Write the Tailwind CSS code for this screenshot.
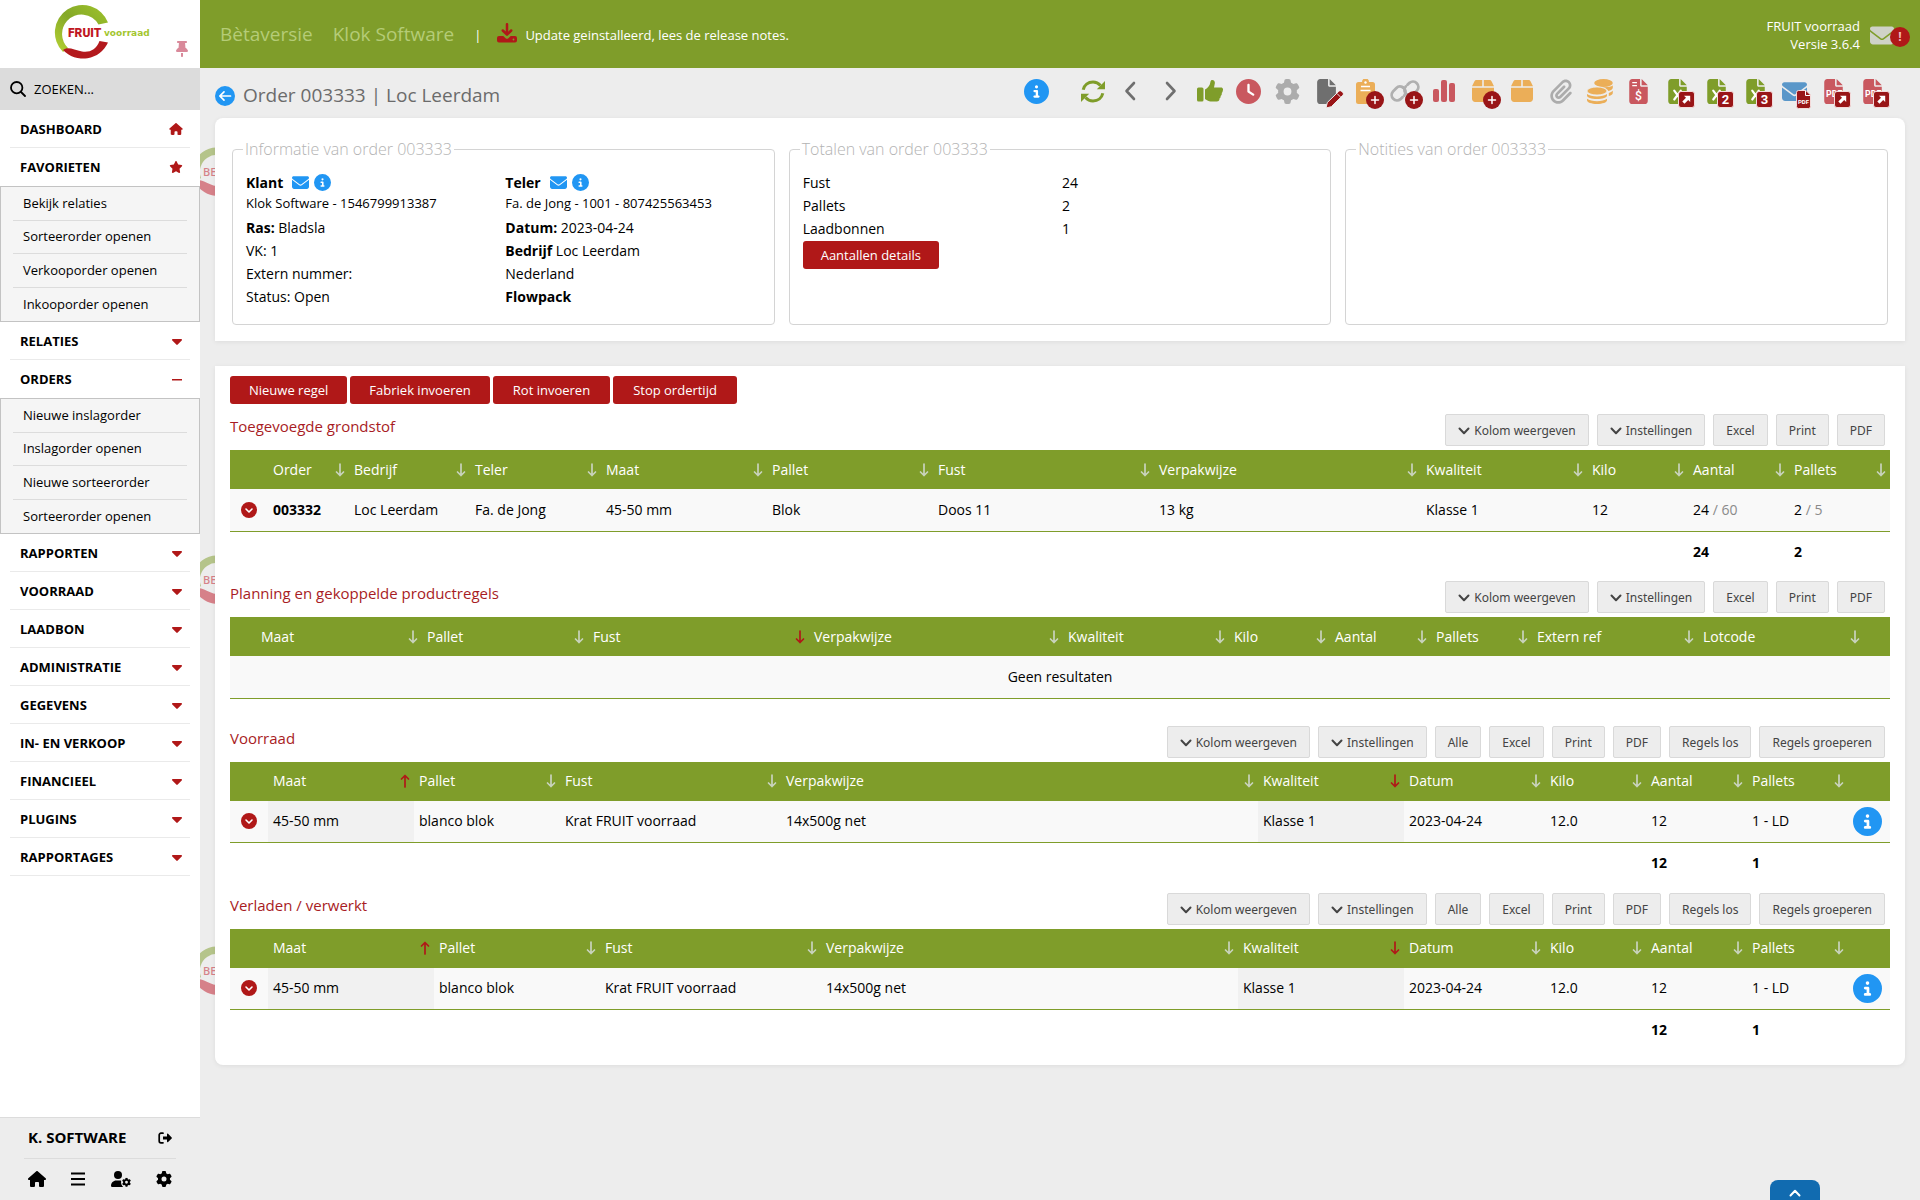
<!DOCTYPE html>
<html lang="nl">
<head>
    <meta charset="UTF-8">
    <meta name="viewport" content="width=device-width, initial-scale=1.0">
    <title>Order 003333 | Loc Leerdam</title>
    <script src="https://cdn.jsdelivr.net/npm/@tailwindcss/browser@4"></script>
</head>
<body class="flex min-h-screen bg-[#ededed] font-['Open_Sans',sans-serif] text-sm text-black">

    <!-- Iconen -->
    <svg class="hidden" xmlns="http://www.w3.org/2000/svg">
        <symbol id="house" viewBox="0 0 576 512"><path d="M575.8 255.5c0 18-15 32.1-32 32.1h-32l.7 160.2c0 2.7-.2 5.4-.5 8.1V472c0 22.1-17.9 40-40 40H456c-1.1 0-2.2 0-3.3-.1c-1.4 .1-2.8 .1-4.2 .1H416 392c-22.1 0-40-17.9-40-40V448 384c0-17.7-14.3-32-32-32H256c-17.7 0-32 14.3-32 32v64 24c0 22.1-17.9 40-40 40H160 128.1c-1.5 0-3-.1-4.5-.2c-1.2 .1-2.4 .2-3.6 .2H104c-22.1 0-40-17.9-40-40V360c0-.9 0-1.9 .1-2.8V287.6H32c-18 0-32-14-32-32.1c0-9 3-17 10-24L266.4 8c7-7 15-8 22-8s15 2 21 7L564.8 231.5c8 7 12 15 11 24z"/></symbol>
        <symbol id="star" viewBox="0 0 576 512"><path d="M316.9 18C311.6 7 300.4 0 288.1 0s-23.4 7-28.8 18L195 150.3 51.4 171.5c-12 1.8-22 10.2-25.7 21.7s-.7 24.2 7.9 32.7L137.8 329 113.2 474.7c-2 12 3 24.2 12.9 31.3s23 8 33.8 2.3l128.3-68.5 128.3 68.5c10.8 5.7 23.9 4.9 33.8-2.3s14.9-19.3 12.9-31.3L438.5 329 542.7 225.9c8.6-8.5 11.7-21.2 7.9-32.7s-13.7-19.9-25.7-21.7L381.2 150.3 316.9 18z"/></symbol>
        <symbol id="caret" viewBox="0 0 10 6"><path d="M1 0h8c.9 0 1.3 1 .7 1.6l-4 4c-.4.4-1 .4-1.4 0l-4-4C-.3 1 .1 0 1 0z"/></symbol>
        <symbol id="info" viewBox="0 0 512 512"><circle cx="256" cy="256" r="230" fill="#fff"/><path d="M256 512A256 256 0 1 0 256 0a256 256 0 1 0 0 512zM216 336h24V272H216c-13.3 0-24-10.7-24-24s10.7-24 24-24h48c13.3 0 24 10.7 24 24v88h8c13.3 0 24 10.7 24 24s-10.7 24-24 24H216c-13.3 0-24-10.7-24-24s10.7-24 24-24zm40-208a32 32 0 1 1 0 64 32 32 0 1 1 0-64z"/></symbol>
        <symbol id="envelope" viewBox="0 64 512 384"><path d="M48 64C21.5 64 0 85.5 0 112c0 15.1 7.1 29.3 19.2 38.4L236.8 313.6c11.4 8.5 27 8.5 38.4 0L492.8 150.4c12.1-9.1 19.2-23.3 19.2-38.4c0-26.5-21.5-48-48-48H48zM0 176V384c0 35.3 28.7 64 64 64H448c35.3 0 64-28.7 64-64V176L294.4 339.2c-22.8 17.1-54 17.1-76.8 0L0 176z"/></symbol>
        <symbol id="gear" viewBox="0 0 512 512"><path d="M495.9 166.6c3.2 8.7 .5 18.4-6.4 24.6l-43.3 39.4c1.1 8.3 1.7 16.8 1.7 25.4s-.6 17.1-1.7 25.4l43.3 39.4c6.9 6.2 9.6 15.9 6.4 24.6c-4.4 11.9-9.7 23.3-15.8 34.3l-4.7 8.1c-6.6 11-14 21.4-22.1 31.2c-5.9 7.2-15.7 9.6-24.5 6.8l-55.7-17.7c-13.4 10.3-28.2 18.9-44 25.4l-12.5 57.1c-2 9.1-9 16.3-18.2 17.8c-13.8 2.3-28 3.5-42.5 3.5s-28.7-1.2-42.5-3.5c-9.2-1.5-16.2-8.7-18.2-17.8l-12.5-57.1c-15.8-6.5-30.6-15.1-44-25.4L83.1 425.9c-8.8 2.8-18.6 .3-24.5-6.8c-8.1-9.8-15.5-20.2-22.1-31.2l-4.7-8.1c-6.1-11-11.4-22.4-15.8-34.3c-3.2-8.7-.5-18.4 6.4-24.6l43.3-39.4C64.6 273.1 64 264.6 64 256s.6-17.1 1.7-25.4L22.4 191.2c-6.9-6.2-9.6-15.9-6.4-24.6c4.4-11.9 9.7-23.3 15.8-34.3l4.7-8.1c6.6-11 14-21.4 22.1-31.2c5.9-7.2 15.7-9.6 24.5-6.8l55.7 17.7c13.4-10.3 28.2-18.9 44-25.4l12.5-57.1c2-9.1 9-16.3 18.2-17.8C227.3 1.2 241.5 0 256 0s28.7 1.2 42.5 3.5c9.2 1.5 16.2 8.7 18.2 17.8l12.5 57.1c15.8 6.5 30.6 15.1 44 25.4l55.7-17.7c8.8-2.8 18.6-.3 24.5 6.8c8.1 9.8 15.5 20.2 22.1 31.2l4.7 8.1c6.1 11 11.4 22.4 15.8 34.3zM256 336a80 80 0 1 0 0-160 80 80 0 1 0 0 160z"/></symbol>
        <symbol id="box" viewBox="0 32 448 448"><path d="M50.7 58.5L0 160H208V32H93.7C75.5 32 58.9 42.3 50.7 58.5zM240 160H448L397.3 58.5C389.1 42.3 372.5 32 354.3 32H240V160zm208 32H0V416c0 35.3 28.7 64 64 64H384c35.3 0 64-28.7 64-64V192z"/></symbol>
        <symbol id="file" viewBox="0 0 384 512"><path d="M0 64C0 28.7 28.7 0 64 0H224V128c0 17.7 14.3 32 32 32H384V448c0 35.3-28.7 64-64 64H64c-35.3 0-64-28.7-64-64V64zm384 64H256V0L384 128z"/></symbol>
        <symbol id="excel" viewBox="0 0 384 512"><use href="#file"/><path d="M125 240l134 180M259 240L125 420" stroke="#fff" stroke-width="44" stroke-linecap="round"/></symbol>
        <symbol id="pdf" viewBox="0 0 384 512"><use href="#file"/><text x="40" y="370" font-family="Roboto" font-weight="700" font-size="180" fill="#fff">PDF</text></symbol>
        <symbol id="plus-badge" viewBox="0 0 18 18"><circle cx="9" cy="9" r="9"/><path d="M9 5.5v7M5.5 9h7" stroke="#fff" stroke-width="1.5" stroke-linecap="round"/></symbol>
        <symbol id="out-badge" viewBox="0 0 17 17"><rect x=".5" y=".5" width="16" height="16" rx="2.5" stroke="#f4dada"/><path d="M6 4.8h6.2V11l-2-2-3.7 3.7-2.2-2.2L8 6.8z" fill="#fff"/></symbol>
        <symbol id="sort" viewBox="0 0 10 14"><path d="M5 1v11.5M1.5 9L5 12.5 8.500 9" fill="none" stroke="currentColor" stroke-width="1.7" stroke-linecap="round" stroke-linejoin="round"/></symbol>
        <symbol id="open-row" viewBox="0 0 16 16"><circle cx="8" cy="8" r="8"/><path d="M5 7l3 3 3-3" fill="none" stroke="#fff" stroke-width="1.6" stroke-linecap="round" stroke-linejoin="round"/></symbol>
        <symbol id="chevron" viewBox="0 0 12 8"><path d="M1.5 1.5L6 6.2l4.500-4.700" fill="none" stroke="currentColor" stroke-width="2" stroke-linecap="round" stroke-linejoin="round"/></symbol>
        <symbol id="watermark" viewBox="0 0 62 56"><path d="M33 10A24 24 0 0 0 -5 38L1 34A17 17 0 0 1 28 15z" fill="#7f9d2a"/><path d="M-5 37C2 33 10 44 22 42L35 44A24 24 0 0 1 -5 37z" fill="#c01828"/><text x="3" y="32" font-family="Open Sans" font-weight="600" font-size="11" fill="#c01828">BETA</text></symbol>
    </svg>

    <!-- Zijmenu -->
    <aside class="sticky top-0 flex h-screen w-[200px] shrink-0 flex-col bg-white">
        <div class="flex h-[68px] shrink-0 justify-end">
            <a href="#" aria-label="FRUIT voorraad">
                <svg class="h-[68px] w-[108px]" viewBox="52 0 108 68">
                    <defs>
                        <linearGradient id="groen" x1="0" y1="1" x2="1" y2="0"><stop offset="0" stop-color="#b7d334"/><stop offset=".5" stop-color="#84a827"/><stop offset="1" stop-color="#9fc42c"/></linearGradient>
                    </defs>
                    <path d="M108 22.500A27.500 27.500 0 1 0 63 52L68 48A19.500 19.500 0 0 1 67 21A19.500 19.500 0 0 1 98.500 24.500z" fill="url(#groen)"/>
                    <path d="M63 50C68 46 74 50 82 51.500C90 52.500 96 50 99.500 41L108 42.500A27.500 27.500 0 0 1 63 50z" fill="#b3191d"/>
                    <text x="68" y="37" font-family="Roboto" font-weight="900" font-size="12" fill="#c01722">FRUIT</text>
                    <text x="104" y="36" font-family="DejaVu Sans" font-weight="700" font-size="9" fill="#a3c62f">voorraad</text>
                </svg>
            </a>
            <button class="mt-[37px] mr-[10px] ml-[14px] flex w-4 justify-center" aria-label="Menu vastzetten"><svg class="mt-1 h-4 w-3 fill-[#d9899a]" viewBox="0 0 384 512"><path d="M32 32C32 14.300 46.300 0 64 0H320c17.700 0 32 14.300 32 32s-14.300 32-32 32H290.500l11.400 148.200c36.700 19.900 65.700 53.200 79.500 94.700l1 3c3.300 9.800 1.600 20.500-4.400 28.800s-15.700 13.300-26 13.300H32c-10.300 0-19.900-4.900-26-13.300s-7.700-19.100-4.400-28.800l1-3c13.800-41.500 42.800-74.800 79.500-94.700L93.500 64H64C46.300 64 32 49.700 32 32zM160 384h64v96c0 17.700-14.300 32-32 32s-32-14.300-32-32V384z"/></svg></button>
        </div>
        <label class="flex h-[42px] shrink-0 items-center gap-2 bg-[#dcdcdc] px-[10px]">
            <svg class="h-4 w-4 shrink-0" viewBox="0 0 16 16" fill="none" stroke="#000" stroke-width="1.800" stroke-linecap="round"><circle cx="6.700" cy="6.700" r="5.700"/><path d="M11 11l4 4"/></svg>
            <input type="text" aria-label="Zoeken" placeholder="ZOEKEN..." class="w-full min-w-0 text-[13px] outline-none placeholder:text-black">
        </label>
        <nav class="flex-1 text-[13px]">
            <a href="#" class="mx-[10px] flex h-[38px] items-center justify-between border-b border-[#eaeaea] pt-px pr-[7px] pl-[10px] font-bold">DASHBOARD<svg class="h-3 w-[14px] fill-[#b01818]"><use href="#house"/></svg></a>
            <a href="#" class="mx-[10px] flex h-[38px] items-center justify-between pr-[7px] pl-[10px] font-bold">FAVORIETEN<svg class="h-3 w-[14px] fill-[#b01818]"><use href="#star"/></svg></a>
            <div class="flex h-[136px] flex-col border border-[#c3c3c3] bg-[#f5f5f5] px-3">
                <a href="#" class="flex flex-1 items-center border-b border-[#dcdcdc] pl-[10px]">Bekijk relaties</a>
                <a href="#" class="flex flex-1 items-center border-b border-[#dcdcdc] pl-[10px]">Sorteerorder openen</a>
                <a href="#" class="flex flex-1 items-center border-b border-[#dcdcdc] pl-[10px]">Verkooporder openen</a>
                <a href="#" class="flex flex-1 items-center pt-px pl-[10px]">Inkooporder openen</a>
            </div>
            <a href="#" class="mx-[10px] flex h-[38px] items-center justify-between border-b border-[#eaeaea] pt-[2px] pr-2 pl-[10px] font-bold">RELATIES<svg class="h-[6px] w-[10px] fill-[#b01818]"><use href="#caret"/></svg></a>
            <a href="#" class="mx-[10px] flex h-[38px] items-center justify-between pt-px pr-2 pl-[10px] font-bold">ORDERS<svg class="h-[6px] w-[10px] fill-[#b01818]" viewBox="0 0 10 6"><rect y="2" width="10" height="1.500"/></svg></a>
            <div class="flex h-[136px] flex-col border border-[#c3c3c3] bg-[#f5f5f5] px-3">
                <a href="#" class="flex flex-1 items-center border-b border-[#dcdcdc] pl-[10px]">Nieuwe inslagorder</a>
                <a href="#" class="flex flex-1 items-center border-b border-[#dcdcdc] pl-[10px]">Inslagorder openen</a>
                <a href="#" class="flex flex-1 items-center border-b border-[#dcdcdc] pl-[10px]">Nieuwe sorteerorder</a>
                <a href="#" class="flex flex-1 items-center pt-px pl-[10px]">Sorteerorder openen</a>
            </div>
            <a href="#" class="mx-[10px] flex h-[38px] items-center justify-between border-b border-[#eaeaea] pt-[2px] pr-2 pl-[10px] font-bold">RAPPORTEN<svg class="h-[6px] w-[10px] fill-[#b01818]"><use href="#caret"/></svg></a>
            <a href="#" class="mx-[10px] flex h-[38px] items-center justify-between border-b border-[#eaeaea] pt-[2px] pr-2 pl-[10px] font-bold">VOORRAAD<svg class="h-[6px] w-[10px] fill-[#b01818]"><use href="#caret"/></svg></a>
            <a href="#" class="mx-[10px] flex h-[38px] items-center justify-between border-b border-[#eaeaea] pt-[2px] pr-2 pl-[10px] font-bold">LAADBON<svg class="h-[6px] w-[10px] fill-[#b01818]"><use href="#caret"/></svg></a>
            <a href="#" class="mx-[10px] flex h-[38px] items-center justify-between border-b border-[#eaeaea] pt-[2px] pr-2 pl-[10px] font-bold">ADMINISTRATIE<svg class="h-[6px] w-[10px] fill-[#b01818]"><use href="#caret"/></svg></a>
            <a href="#" class="mx-[10px] flex h-[38px] items-center justify-between border-b border-[#eaeaea] pt-[2px] pr-2 pl-[10px] font-bold">GEGEVENS<svg class="h-[6px] w-[10px] fill-[#b01818]"><use href="#caret"/></svg></a>
            <a href="#" class="mx-[10px] flex h-[38px] items-center justify-between border-b border-[#eaeaea] pt-[2px] pr-2 pl-[10px] font-bold">IN- EN VERKOOP<svg class="h-[6px] w-[10px] fill-[#b01818]"><use href="#caret"/></svg></a>
            <a href="#" class="mx-[10px] flex h-[38px] items-center justify-between border-b border-[#eaeaea] pt-[2px] pr-2 pl-[10px] font-bold">FINANCIEEL<svg class="h-[6px] w-[10px] fill-[#b01818]"><use href="#caret"/></svg></a>
            <a href="#" class="mx-[10px] flex h-[38px] items-center justify-between border-b border-[#eaeaea] pt-[2px] pr-2 pl-[10px] font-bold">PLUGINS<svg class="h-[6px] w-[10px] fill-[#b01818]"><use href="#caret"/></svg></a>
            <a href="#" class="mx-[10px] flex h-[38px] items-center justify-between border-b border-[#eaeaea] pt-[2px] pr-2 pl-[10px] font-bold">RAPPORTAGES<svg class="h-[6px] w-[10px] fill-[#b01818]"><use href="#caret"/></svg></a>
        </nav>
        <div class="h-[83px] shrink-0 border-t border-[#dcdcdc] bg-[#ededed] px-6">
            <div class="flex h-[41px] items-center justify-between border-b border-[#dcdcdc] pr-1 pl-1">
                <span class="text-[15px] font-bold">K. SOFTWARE</span>
                <button aria-label="Uitloggen"><svg class="h-3 w-[14px]" viewBox="0 0 14 12"><path d="M5 1.200H3A1.800 1.800 0 0 0 1.200 3v6A1.800 1.800 0 0 0 3 10.800h2" fill="none" stroke="#000" stroke-width="1.700" stroke-linecap="round"/><path d="M5 4.500h4V2.300c0-.6.700-.9 1.100-.5l3.600 3.700c.3.300.3.700 0 1L10.100 10c-.4.400-1.100.1-1.100-.5V7.500H5z"/></svg></button>
            </div>
            <div class="flex h-10 items-center justify-between px-1">
                <button aria-label="Start"><svg class="h-4 w-[18px]"><use href="#house"/></svg></button>
                <button aria-label="Menu"><svg class="h-4 w-[14px]" viewBox="0 0 14 16" stroke="#000" stroke-width="2"><path d="M0 2.500h14M0 8h14M0 13.500h14"/></svg></button>
                <button aria-label="Gebruikersinstellingen"><svg class="h-4 w-5" viewBox="0 0 20 16"><circle cx="7" cy="4" r="4"/><path d="M0 14.800C0 11.800 2.300 9.500 5.300 9.500h3.400c.6 0 1 .1 1.500.2-.5 2.500.3 4.700 2 6.300H1.200A1.200 1.200 0 0 1 0 14.800z"/><svg x="11" y="6.500" width="9" height="9.500"><use href="#gear"/></svg></svg></button>
                <button aria-label="Instellingen"><svg class="h-4 w-4"><use href="#gear"/></svg></button>
            </div>
        </div>
    </aside>

    <main class="relative min-w-0 flex-1 overflow-hidden">
        <!-- Watermerk achter de kaarten -->
        <svg class="absolute top-[144px] left-0 h-14 w-[62px] opacity-50"><use href="#watermark"/></svg>
        <svg class="absolute top-[552px] left-0 h-14 w-[62px] opacity-50"><use href="#watermark"/></svg>
        <svg class="absolute top-[943px] left-0 h-14 w-[62px] opacity-50"><use href="#watermark"/></svg>

        <header class="flex h-[68px] items-center bg-[#7f9d2a] pt-[2px] pr-[10px] pl-5 text-[13px] text-white">
            <span class="mr-5 text-[19px] text-[#b5cc77]">Bètaversie</span>
            <span class="mr-5 text-[19px] text-[#b5cc77]">Klok Software</span>
            <span class="mr-4">|</span>
            <svg class="mr-2 mb-1 h-5 w-5 fill-[#b01818]" viewBox="0 0 20 20"><path d="M10 1.200v10M5.800 7.500L10 11.700l4.200-4.200" fill="none" stroke="#b01818" stroke-width="2.500" stroke-linecap="round" stroke-linejoin="round"/><path d="M2 13h4.300l2.300 2.200c.8.700 2 .7 2.800 0L13.700 13H18a2 2 0 0 1 2 2v2.500a2 2 0 0 1-2 2H2a2 2 0 0 1-2-2V15a2 2 0 0 1 2-2z"/><circle cx="16.500" cy="16.500" r=".9" fill="#7f9d2a"/></svg>
            <a href="#">Update geinstalleerd, lees de release notes.</a>
            <div class="ml-auto text-right leading-[18px]">FRUIT voorraad<br>Versie 3.6.4</div>
            <button class="relative ml-[10px] h-6 w-10" aria-label="Berichten">
                <svg class="h-[19px] w-6 fill-[#cfd2c8]"><use href="#envelope"/></svg>
                <span class="absolute top-1 right-0 flex h-5 w-5 items-center justify-center rounded-full bg-[#b01818] text-xs font-bold text-[#f2b8b8]">!</span>
            </button>
        </header>

        <div class="relative">
            <div class="flex h-[50px] items-center pt-[5px] pr-7 pl-[15px]">
                <a href="#" aria-label="Terug"><svg class="h-5 w-5" viewBox="0 0 20 20"><circle cx="10" cy="10" r="10" fill="#2196f3"/><path d="M15.500 10H5M9 5.800L4.800 10 9 14.200" fill="none" stroke="#fff" stroke-width="1.700" stroke-linecap="round" stroke-linejoin="round"/></svg></a>
                <h1 class="ml-2 text-[19px] text-[#6b6b6b]">Order 003333 | Loc Leerdam</h1>
                <div class="mb-[9px] ml-auto flex">
                    <button class="mr-[17px] flex h-10 w-[39px] items-center justify-center" aria-label="Info"><svg class="h-[25px] w-[25px] fill-[#2196f3]"><use href="#info"/></svg></button>
                    <button class="flex h-10 w-[39px] items-center justify-center" aria-label="Vernieuwen"><svg class="h-[25px] w-6" viewBox="0 0 24 24" fill="none" stroke="#7f9d2a" stroke-width="3"><path d="M2.200 10.200C3.200 5.600 7 2.500 12 2.500c3 0 5.600 1.400 7.500 3.600"/><path d="M21.800 13.800c-1 4.600-4.800 7.700-9.800 7.700-3 0-5.600-1.400-7.500-3.600"/><path d="M24 1.500V9.700H15.800zM0 22.500V14.300H8.200z" fill="#7f9d2a" stroke="none"/></svg></button>
                    <button class="flex h-10 w-[39px] items-center justify-center pr-1" aria-label="Vorige"><svg class="h-5 w-3" viewBox="0 0 12 20" fill="none" stroke="#6f6f6f" stroke-width="2.600" stroke-linecap="round" stroke-linejoin="round"><path d="M10 2L2.500 10 10 18"/></svg></button>
                    <button class="flex h-10 w-[39px] items-center justify-center" aria-label="Volgende"><svg class="h-5 w-3" viewBox="0 0 12 20" fill="none" stroke="#6f6f6f" stroke-width="2.600" stroke-linecap="round" stroke-linejoin="round"><path d="M2 2l7.500 8L2 18"/></svg></button>
                    <button class="flex h-10 w-[39px] items-center justify-center" aria-label="Akkoord"><svg class="h-6 w-[26px] fill-[#7f9d2a]" viewBox="0 0 26 24"><rect y="8.500" width="6.500" height="14" rx="1.500"/><path d="M8 10.500c3-1.500 4.800-4 5.300-7C13.600 1.500 14.300 1 15.300 1c1.800 0 2.900 1.600 2.500 3.600L17 8.500h7c1.300 0 2.200 1 2 2.200l-.3 1.600c-.1.800-.5 1.300-1 1.600.2.400.2.900.1 1.400-.1.700-.6 1.300-1.200 1.600.1.300.1.700 0 1.100-.1.700-.6 1.300-1.200 1.500.1.300.1.600 0 1-.2 1.200-1.200 2-2.400 2h-6.500c-1.700 0-3.200-1-5.500-2.500z"/></svg></button>
                    <button class="flex h-10 w-[39px] items-center justify-center" aria-label="Tijd"><svg class="h-[25px] w-[25px] fill-[#c9585f]" viewBox="0 0 512 512"><circle cx="256" cy="256" r="230" fill="#fff"/><path d="M256 0a256 256 0 1 1 0 512A256 256 0 1 1 256 0zM232 120V256c0 8 4 15.500 10.700 20l96 64c11 7.400 25.900 4.400 33.300-6.700s4.400-25.900-6.700-33.300L280 243.200V120c0-13.300-10.700-24-24-24s-24 10.700-24 24z"/></svg></button>
                    <button class="flex h-10 w-[39px] items-center justify-center" aria-label="Instellingen"><svg class="h-[25px] w-[25px] fill-[#acacac]"><use href="#gear"/></svg></button>
                    <button class="relative flex h-10 w-[39px] items-center justify-center" aria-label="Bewerken"><svg class="h-[25px] w-[19px] fill-[#6f6f6f]"><use href="#file"/></svg><svg class="absolute top-[19px] left-[18px] h-[19px] w-[19px]" viewBox="0 0 19 19"><path d="M1 18l1.300-5.500L13.800 1.300c.8-.8 1.900-.8 2.700 0l1.300 1.300c.8.800.8 1.900 0 2.700L6.300 16.700z" fill="#991517" stroke="#ededed" stroke-width="1"/><path d="M12 3.500L15.500 7" stroke="#ededed"/></svg></button>
                    <button class="relative flex h-10 w-[39px] items-center justify-center" aria-label="Klembord toevoegen"><svg class="h-[25px] w-[19px]" viewBox="0 0 19 25"><path d="M2.500 3H6a3.500 3.500 0 0 1 7 0h3.500A2.500 2.500 0 0 1 19 5.500v17a2.500 2.500 0 0 1-2.500 2.500h-14A2.500 2.500 0 0 1 0 22.500v-17A2.500 2.500 0 0 1 2.500 3z" fill="#ebae58"/><circle cx="9.500" cy="3.500" r="1.200" fill="#fff"/><path d="M5 7.500h9M4.500 11.500h10" stroke="#fff" stroke-width="1.300"/></svg><svg class="absolute top-5 left-5 h-[18px] w-[18px] fill-[#991517]"><use href="#plus-badge"/></svg></button>
                    <button class="relative flex h-10 w-[39px] items-center justify-center" aria-label="Koppeling toevoegen"><svg class="h-6 w-[30px]" viewBox="0 0 30 24" fill="none" stroke="#b0b0b0" stroke-width="2.800" stroke-linecap="round"><path d="M12.700 8.200a5.300 5.300 0 0 0-6.500 1l-3.300 3.400A5.400 5.400 0 0 0 10.500 20.200l2-2"/><path d="M12.700 8.200a5.400 5.400 0 0 1 1.500 8.400"/><path d="M17.300 15.800a5.300 5.300 0 0 0 6.500-1l3.300-3.400A5.400 5.400 0 0 0 19.500 3.800l-2 2"/><path d="M17.300 15.800a5.400 5.400 0 0 1-1.500-8.400"/></svg><svg class="absolute top-5 left-5 h-[18px] w-[18px] fill-[#991517]"><use href="#plus-badge"/></svg></button>
                    <button class="flex h-10 w-[39px] items-center justify-center" aria-label="Grafiek"><svg class="h-[22px] w-[22px] fill-[#c9585f]" viewBox="0 0 22 22"><rect y="9" width="6" height="13" rx="2"/><rect x="8" width="6" height="22" rx="2"/><rect x="16" y="3" width="6" height="19" rx="2"/></svg></button>
                    <button class="relative flex h-10 w-[39px] items-center justify-center" aria-label="Doos toevoegen"><svg class="h-[22px] w-[22px] fill-[#ebae58]"><use href="#box"/></svg><svg class="absolute top-5 left-5 h-[18px] w-[18px] fill-[#991517]"><use href="#plus-badge"/></svg></button>
                    <button class="flex h-10 w-[39px] items-center justify-center" aria-label="Doos"><svg class="h-[22px] w-[22px] fill-[#ebae58]"><use href="#box"/></svg></button>
                    <button class="flex h-10 w-[39px] items-center justify-center" aria-label="Bijlage"><svg class="h-[25px] w-[22px] fill-[#acacac]" viewBox="0 0 448 512"><path d="M364.200 83.800c-24.400-24.400-64-24.400-88.400 0l-184 184c-42.100 42.100-42.100 110.300 0 152.400s110.300 42.100 152.400 0l152-152c10.900-10.900 28.700-10.900 39.600 0s10.900 28.700 0 39.600l-152 152c-64 64-167.600 64-231.600 0s-64-167.600 0-231.600l184-184c46.300-46.300 121.300-46.300 167.600 0s46.300 121.300 0 167.600l-176 176c-28.600 28.600-75 28.600-103.600 0s-28.600-75 0-103.600l144-144c10.900-10.900 28.700-10.900 39.600 0s10.900 28.700 0 39.600l-144 144c-6.700 6.700-6.700 17.700 0 24.400s17.700 6.700 24.400 0l176-176c24.400-24.400 24.400-64 0-88.400z"/></svg></button>
                    <button class="flex h-10 w-[39px] items-center justify-center" aria-label="Kosten"><svg class="h-[25px] w-[26px]" viewBox="0 0 26 25" fill="#ebae58"><ellipse cx="16.500" cy="4" rx="9.300" ry="4"/><path d="M25.800 6.500v2.200c0 1.500-2 2.700-4.500 3.400-.6-1.700-3-3.300-6-4 4.500.3 8.500-.2 10.500-1.600zM25.800 11.800V14c0 1.300-1.500 2.400-4 3v-3c1.600-.5 3-1.200 4-2.200z"/><ellipse cx="10" cy="12" rx="10" ry="4" stroke="#ededed" stroke-width=".8"/><path d="M0 15c4 3.200 16 3.200 20 0v1.500c0 2.200-4.500 3.600-10 3.600S0 18.700 0 16.500zM0 19.800c4 3.200 16 3.200 20 0v1.500c0 2.200-4.500 3.700-10 3.700S0 23.500 0 21.300z"/></svg></button>
                    <button class="flex h-10 w-[39px] items-center justify-center" aria-label="Factuur"><svg class="h-[25px] w-[19px] fill-[#c9585f]" viewBox="0 0 384 512"><use href="#file"/><path d="M64 72h96M64 136h96" stroke="#fff" stroke-width="26"/><text x="120" y="426" font-family="Roboto" font-weight="500" font-size="250" fill="#fff">$</text></svg></button>
                    <button class="relative flex h-10 w-[39px] items-center justify-center" aria-label="Excel export"><svg class="h-[25px] w-[19px] fill-[#7f9d2a]"><use href="#excel"/></svg><svg class="absolute top-5 left-5 h-[17px] w-[17px] fill-[#991517]"><use href="#out-badge"/></svg></button>
                    <button class="relative flex h-10 w-[39px] items-center justify-center" aria-label="Excel export 2"><svg class="h-[25px] w-[19px] fill-[#7f9d2a]"><use href="#excel"/></svg><span class="absolute top-5 left-5 h-[17px] w-[17px] rounded-[3px] border border-[#f4dada] bg-[#991517] font-['Roboto'] text-[13px] leading-[15px] font-bold text-white">2</span></button>
                    <button class="relative flex h-10 w-[39px] items-center justify-center" aria-label="Excel export 3"><svg class="h-[25px] w-[19px] fill-[#7f9d2a]"><use href="#excel"/></svg><span class="absolute top-5 left-5 h-[17px] w-[17px] rounded-[3px] border border-[#f4dada] bg-[#991517] font-['Roboto'] text-[13px] leading-[15px] font-bold text-white">3</span></button>
                    <button class="relative flex h-10 w-[39px] items-center justify-center" aria-label="PDF mailen"><svg class="h-[19px] w-[25px] fill-[#5a97c9]"><use href="#envelope"/></svg><svg class="absolute top-[19px] left-[21px] h-[19px] w-[15px]" viewBox="0 0 15 19"><path d="M2.500.5H10l4.500 4.500v11.500a2 2 0 0 1-2 2h-10a2 2 0 0 1-2-2v-14a2 2 0 0 1 2-2z" fill="#991517" stroke="#f4dada"/><path d="M9.500 1v4.500H14" fill="none" stroke="#fff"/><text x="2" y="14" font-family="Roboto" font-weight="700" font-size="6" fill="#fff">PDF</text></svg></button>
                    <button class="relative flex h-10 w-[39px] items-center justify-center" aria-label="PDF export"><svg class="h-[25px] w-[19px] fill-[#c9585f]"><use href="#pdf"/></svg><svg class="absolute top-5 left-5 h-[17px] w-[17px] fill-[#991517]"><use href="#out-badge"/></svg></button>
                    <button class="relative flex h-10 w-[39px] items-center justify-center" aria-label="PDF export 2"><svg class="h-[25px] w-[19px] fill-[#c9585f]"><use href="#pdf"/></svg><svg class="absolute top-5 left-5 h-[17px] w-[17px] fill-[#991517]"><use href="#out-badge"/></svg></button>
                </div>
            </div>

            <!-- Ordergegevens -->
            <section class="mx-[15px] grid grid-cols-3 gap-[14px] rounded-t-lg bg-white px-[17px] pt-[19px] pb-4 shadow-[0_1px_5px_rgba(0,0,0,0.07)]">
                <fieldset class="rounded border border-[#d4d4d4] px-[10px]">
                    <legend class="px-[2px] text-base leading-6 font-light text-[#b3b3b3]">Informatie van order 003333</legend>
                    <div class="grid grid-cols-2 gap-x-1 px-[3px] pt-[10px] pb-4 leading-[23px]">
                        <div>
                            <div class="flex h-[23px] items-center"><b>Klant</b>
                                <a href="#" class="ml-[9px]" aria-label="Mail klant"><svg class="h-[13px] w-[17px] fill-[#2196f3]"><use href="#envelope"/></svg></a>
                                <a href="#" class="ml-[5px]" aria-label="Info klant"><svg class="h-[17px] w-[17px] fill-[#2196f3]"><use href="#info"/></svg></a>
                            </div>
                            <p class="mb-1 text-[13px] leading-[18px]">Klok Software - 1546799913387</p>
                            <p><b>Ras:</b> Bladsla</p>
                            <p>VK: 1</p>
                            <p>Extern nummer:</p>
                            <p>Status: Open</p>
                        </div>
                        <div>
                            <div class="flex h-[23px] items-center"><b>Teler</b>
                                <a href="#" class="ml-[9px]" aria-label="Mail teler"><svg class="h-[13px] w-[17px] fill-[#2196f3]"><use href="#envelope"/></svg></a>
                                <a href="#" class="ml-[5px]" aria-label="Info teler"><svg class="h-[17px] w-[17px] fill-[#2196f3]"><use href="#info"/></svg></a>
                            </div>
                            <p class="mb-1 text-[13px] leading-[18px]">Fa. de Jong - 1001 - 807425563453</p>
                            <p><b>Datum:</b> 2023-04-24</p>
                            <p><b>Bedrijf</b> Loc Leerdam</p>
                            <p>Nederland</p>
                            <p><b>Flowpack</b></p>
                        </div>
                    </div>
                </fieldset>
                <fieldset class="rounded border border-[#d4d4d4] px-[10px]">
                    <legend class="px-[2px] text-base leading-6 font-light text-[#b3b3b3]">Totalen van order 003333</legend>
                    <dl class="grid grid-cols-2 gap-x-1 px-[3px] pt-[10px] pb-px leading-[23px]">
                        <dt>Fust</dt><dd>24</dd>
                        <dt>Pallets</dt><dd>2</dd>
                        <dt>Laadbonnen</dt><dd>1</dd>
                    </dl>
                    <button class="ml-[3px] h-7 rounded-[3px] bg-[#b01818] px-[18px] pt-px text-[13px] text-white">Aantallen details</button>
                </fieldset>
                <fieldset class="rounded border border-[#d4d4d4] px-[10px]">
                    <legend class="px-[2px] text-base leading-6 font-light text-[#b3b3b3]">Notities van order 003333</legend>
                </fieldset>
            </section>

            <section class="mx-[15px] mt-[25px] rounded-b-lg bg-white px-[15px] pt-[10px] pb-[14px] shadow-[0_1px_5px_rgba(0,0,0,0.07)]">
                <div class="mb-[10px] flex gap-[3px] text-[13px] text-white">
                    <button class="h-7 rounded-[3px] bg-[#b01818] px-[19px] pt-px">Nieuwe regel</button>
                    <button class="h-7 rounded-[3px] bg-[#b01818] px-[19px] pt-px">Fabriek invoeren</button>
                    <button class="h-7 rounded-[3px] bg-[#b01818] px-5 pt-px">Rot invoeren</button>
                    <button class="h-7 rounded-[3px] bg-[#b01818] px-5 pt-px">Stop ordertijd</button>
                </div>

                <!-- Toegevoegde grondstof -->
                <div class="flex h-9 justify-between pr-[5px]">
                    <h2 class="text-[15px] leading-[25px] text-[#a81c24]">Toegevoegde grondstof</h2>
                    <div class="flex h-8 gap-2 font-['Noto_Sans',sans-serif] text-xs text-[#444]">
                        <button class="flex items-center gap-1 rounded-[2px] border border-[#d9d9d9] bg-[#ededed] px-3 pt-[2px]"><svg class="h-2 w-3"><use href="#chevron"/></svg>Kolom weergeven</button>
                        <button class="flex items-center gap-1 rounded-[2px] border border-[#d9d9d9] bg-[#ededed] px-3 pt-[2px]"><svg class="h-2 w-3"><use href="#chevron"/></svg>Instellingen</button>
                        <button class="rounded-[2px] border border-[#d9d9d9] bg-[#ededed] px-3 pt-[2px]">Excel</button>
                        <button class="rounded-[2px] border border-[#d9d9d9] bg-[#ededed] px-3 pt-[2px]">Print</button>
                        <button class="rounded-[2px] border border-[#d9d9d9] bg-[#ededed] px-3 pt-[2px]">PDF</button>
                    </div>
                </div>
                <table class="mb-[9px] w-full table-fixed text-left">
                    <colgroup><col class="w-[38px]"><col class="w-[81px]"><col class="w-[121px]"><col class="w-[131px]"><col class="w-[166px]"><col class="w-[166px]"><col class="w-[221px]"><col class="w-[267px]"><col class="w-[166px]"><col class="w-[101px]"><col class="w-[101px]"><col class="w-[101px]"></colgroup>
                    <thead class="bg-[#7f9d2a] text-white">
                        <tr class="h-[39px] *:pr-1 *:pl-[5px] *:font-normal">
                            <td></td>
                            <th><div class="flex items-center justify-between">Order<svg class="h-[14px] w-[10px] text-[#c9d3bd]"><use href="#sort"/></svg></div></th>
                            <th><div class="flex items-center justify-between">Bedrijf<svg class="h-[14px] w-[10px] text-[#c9d3bd]"><use href="#sort"/></svg></div></th>
                            <th><div class="flex items-center justify-between">Teler<svg class="h-[14px] w-[10px] text-[#c9d3bd]"><use href="#sort"/></svg></div></th>
                            <th><div class="flex items-center justify-between">Maat<svg class="h-[14px] w-[10px] text-[#c9d3bd]"><use href="#sort"/></svg></div></th>
                            <th><div class="flex items-center justify-between">Pallet<svg class="h-[14px] w-[10px] text-[#c9d3bd]"><use href="#sort"/></svg></div></th>
                            <th><div class="flex items-center justify-between">Fust<svg class="h-[14px] w-[10px] text-[#c9d3bd]"><use href="#sort"/></svg></div></th>
                            <th><div class="flex items-center justify-between">Verpakwijze<svg class="h-[14px] w-[10px] text-[#c9d3bd]"><use href="#sort"/></svg></div></th>
                            <th><div class="flex items-center justify-between">Kwaliteit<svg class="h-[14px] w-[10px] text-[#c9d3bd]"><use href="#sort"/></svg></div></th>
                            <th><div class="flex items-center justify-between">Kilo<svg class="h-[14px] w-[10px] text-[#c9d3bd]"><use href="#sort"/></svg></div></th>
                            <th><div class="flex items-center justify-between">Aantal<svg class="h-[14px] w-[10px] text-[#c9d3bd]"><use href="#sort"/></svg></div></th>
                            <th><div class="flex items-center justify-between">Pallets<svg class="h-[14px] w-[10px] text-[#c9d3bd]"><use href="#sort"/></svg></div></th>
                        </tr>
                    </thead>
                    <tbody>
                        <tr class="h-[42px] border-b border-[#7f9d2a] bg-[#f9f9f9] *:pl-[5px]">
                            <td><button class="ml-[6px] block" aria-label="Regel openen"><svg class="h-4 w-4 fill-[#b01818]"><use href="#open-row"/></svg></button></td>
                            <td class="font-bold">003332</td><td>Loc Leerdam</td><td>Fa. de Jong</td><td>45-50 mm</td><td>Blok</td><td>Doos 11</td><td>13 kg</td><td>Klasse 1</td><td>12</td>
                            <td>24 <span class="text-[#8a8a8a]">/ 60</span></td><td>2 <span class="text-[#8a8a8a]">/ 5</span></td>
                        </tr>
                    </tbody>
                    <tfoot>
                        <tr class="h-[41px] font-bold *:pl-[5px]"><td colspan="10"></td><td>24</td><td>2</td></tr>
                    </tfoot>
                </table>

                <!-- Planning -->
                <div class="flex h-9 justify-between pr-[5px]">
                    <h2 class="text-[15px] leading-[25px] text-[#a81c24]">Planning en gekoppelde productregels</h2>
                    <div class="flex h-8 gap-2 font-['Noto_Sans',sans-serif] text-xs text-[#444]">
                        <button class="flex items-center gap-1 rounded-[2px] border border-[#d9d9d9] bg-[#ededed] px-3 pt-[2px]"><svg class="h-2 w-3"><use href="#chevron"/></svg>Kolom weergeven</button>
                        <button class="flex items-center gap-1 rounded-[2px] border border-[#d9d9d9] bg-[#ededed] px-3 pt-[2px]"><svg class="h-2 w-3"><use href="#chevron"/></svg>Instellingen</button>
                        <button class="rounded-[2px] border border-[#d9d9d9] bg-[#ededed] px-3 pt-[2px]">Excel</button>
                        <button class="rounded-[2px] border border-[#d9d9d9] bg-[#ededed] px-3 pt-[2px]">Print</button>
                        <button class="rounded-[2px] border border-[#d9d9d9] bg-[#ededed] px-3 pt-[2px]">PDF</button>
                    </div>
                </div>
                <table class="mb-[27px] w-full table-fixed text-left">
                    <colgroup><col class="w-[26px]"><col class="w-[166px]"><col class="w-[166px]"><col class="w-[221px]"><col class="w-[254px]"><col class="w-[166px]"><col class="w-[101px]"><col class="w-[101px]"><col class="w-[101px]"><col class="w-[166px]"><col class="w-[166px]"><col class="w-[26px]"></colgroup>
                    <thead class="bg-[#7f9d2a] text-white">
                        <tr class="h-[39px] *:pr-1 *:pl-[5px] *:font-normal">
                            <td></td>
                            <th><div class="flex items-center justify-between">Maat<svg class="h-[14px] w-[10px] text-[#c9d3bd]"><use href="#sort"/></svg></div></th>
                            <th><div class="flex items-center justify-between">Pallet<svg class="h-[14px] w-[10px] text-[#c9d3bd]"><use href="#sort"/></svg></div></th>
                            <th><div class="flex items-center justify-between">Fust<svg class="h-[14px] w-[10px] text-[#b01818]"><use href="#sort"/></svg></div></th>
                            <th><div class="flex items-center justify-between">Verpakwijze<svg class="h-[14px] w-[10px] text-[#c9d3bd]"><use href="#sort"/></svg></div></th>
                            <th><div class="flex items-center justify-between">Kwaliteit<svg class="h-[14px] w-[10px] text-[#c9d3bd]"><use href="#sort"/></svg></div></th>
                            <th><div class="flex items-center justify-between">Kilo<svg class="h-[14px] w-[10px] text-[#c9d3bd]"><use href="#sort"/></svg></div></th>
                            <th><div class="flex items-center justify-between">Aantal<svg class="h-[14px] w-[10px] text-[#c9d3bd]"><use href="#sort"/></svg></div></th>
                            <th><div class="flex items-center justify-between">Pallets<svg class="h-[14px] w-[10px] text-[#c9d3bd]"><use href="#sort"/></svg></div></th>
                            <th><div class="flex items-center justify-between">Extern ref<svg class="h-[14px] w-[10px] text-[#c9d3bd]"><use href="#sort"/></svg></div></th>
                            <th><div class="flex items-center justify-between">Lotcode<svg class="h-[14px] w-[10px] text-[#c9d3bd]"><use href="#sort"/></svg></div></th>
                            <td></td>
                        </tr>
                    </thead>
                    <tbody>
                        <tr class="h-[42px] border-b border-[#7f9d2a] bg-[#f9f9f9]"><td colspan="12" class="text-center">Geen resultaten</td></tr>
                    </tbody>
                </table>

                <!-- Voorraad -->
                <div class="flex h-9 justify-between pr-[5px]">
                    <h2 class="text-[15px] leading-[25px] text-[#a81c24]">Voorraad</h2>
                    <div class="flex h-8 gap-2 font-['Noto_Sans',sans-serif] text-xs text-[#444]">
                        <button class="flex items-center gap-1 rounded-[2px] border border-[#d9d9d9] bg-[#ededed] px-3 pt-[2px]"><svg class="h-2 w-3"><use href="#chevron"/></svg>Kolom weergeven</button>
                        <button class="flex items-center gap-1 rounded-[2px] border border-[#d9d9d9] bg-[#ededed] px-3 pt-[2px]"><svg class="h-2 w-3"><use href="#chevron"/></svg>Instellingen</button>
                        <button class="rounded-[2px] border border-[#d9d9d9] bg-[#ededed] px-3 pt-[2px]">Alle</button>
                        <button class="rounded-[2px] border border-[#d9d9d9] bg-[#ededed] px-3 pt-[2px]">Excel</button>
                        <button class="rounded-[2px] border border-[#d9d9d9] bg-[#ededed] px-3 pt-[2px]">Print</button>
                        <button class="rounded-[2px] border border-[#d9d9d9] bg-[#ededed] px-3 pt-[2px]">PDF</button>
                        <button class="rounded-[2px] border border-[#d9d9d9] bg-[#ededed] px-3 pt-[2px]">Regels los</button>
                        <button class="rounded-[2px] border border-[#d9d9d9] bg-[#ededed] px-3 pt-[2px]">Regels groeperen</button>
                    </div>
                </div>
                <table class="mb-[9px] w-full table-fixed text-left">
                    <colgroup><col class="w-[38px]"><col class="w-[146px]"><col class="w-[146px]"><col class="w-[221px]"><col class="w-[477px]"><col class="w-[146px]"><col class="w-[141px]"><col class="w-[101px]"><col class="w-[101px]"><col class="w-[101px]"><col class="w-[42px]"></colgroup>
                    <thead class="bg-[#7f9d2a] text-white">
                        <tr class="h-[39px] *:pr-1 *:pl-[5px] *:font-normal">
                            <td></td>
                            <th><div class="flex items-center justify-between">Maat<svg class="h-[14px] w-[10px] rotate-180 text-[#b01818]"><use href="#sort"/></svg></div></th>
                            <th><div class="flex items-center justify-between">Pallet<svg class="h-[14px] w-[10px] text-[#c9d3bd]"><use href="#sort"/></svg></div></th>
                            <th><div class="flex items-center justify-between">Fust<svg class="h-[14px] w-[10px] text-[#c9d3bd]"><use href="#sort"/></svg></div></th>
                            <th><div class="flex items-center justify-between">Verpakwijze<svg class="h-[14px] w-[10px] text-[#c9d3bd]"><use href="#sort"/></svg></div></th>
                            <th><div class="flex items-center justify-between">Kwaliteit<svg class="h-[14px] w-[10px] text-[#b01818]"><use href="#sort"/></svg></div></th>
                            <th><div class="flex items-center justify-between">Datum<svg class="h-[14px] w-[10px] text-[#c9d3bd]"><use href="#sort"/></svg></div></th>
                            <th><div class="flex items-center justify-between">Kilo<svg class="h-[14px] w-[10px] text-[#c9d3bd]"><use href="#sort"/></svg></div></th>
                            <th><div class="flex items-center justify-between">Aantal<svg class="h-[14px] w-[10px] text-[#c9d3bd]"><use href="#sort"/></svg></div></th>
                            <th><div class="flex items-center justify-between">Pallets<svg class="h-[14px] w-[10px] text-[#c9d3bd]"><use href="#sort"/></svg></div></th>
                            <td></td>
                        </tr>
                    </thead>
                    <tbody>
                        <tr class="h-[42px] border-b border-[#7f9d2a] bg-[#f9f9f9] *:pl-[5px]">
                            <td><button class="ml-[6px] block" aria-label="Regel openen"><svg class="h-4 w-4 fill-[#b01818]"><use href="#open-row"/></svg></button></td>
                            <td class="bg-[#f1f1f1]">45-50 mm</td><td>blanco blok</td><td>Krat FRUIT voorraad</td><td>14x500g net</td><td class="bg-[#f1f1f1]">Klasse 1</td><td>2023-04-24</td><td>12.0</td><td>12</td><td>1 - LD</td>
                            <td><a href="#" aria-label="Info regel"><svg class="h-[29px] w-[29px] fill-[#2196f3]"><use href="#info"/></svg></a></td>
                        </tr>
                    </tbody>
                    <tfoot>
                        <tr class="h-[41px] font-bold *:pl-[5px]"><td colspan="8"></td><td>12</td><td>1</td><td></td></tr>
                    </tfoot>
                </table>

                <!-- Verladen / verwerkt -->
                <div class="flex h-9 justify-between pr-[5px]">
                    <h2 class="text-[15px] leading-[25px] text-[#a81c24]">Verladen / verwerkt</h2>
                    <div class="flex h-8 gap-2 font-['Noto_Sans',sans-serif] text-xs text-[#444]">
                        <button class="flex items-center gap-1 rounded-[2px] border border-[#d9d9d9] bg-[#ededed] px-3 pt-[2px]"><svg class="h-2 w-3"><use href="#chevron"/></svg>Kolom weergeven</button>
                        <button class="flex items-center gap-1 rounded-[2px] border border-[#d9d9d9] bg-[#ededed] px-3 pt-[2px]"><svg class="h-2 w-3"><use href="#chevron"/></svg>Instellingen</button>
                        <button class="rounded-[2px] border border-[#d9d9d9] bg-[#ededed] px-3 pt-[2px]">Alle</button>
                        <button class="rounded-[2px] border border-[#d9d9d9] bg-[#ededed] px-3 pt-[2px]">Excel</button>
                        <button class="rounded-[2px] border border-[#d9d9d9] bg-[#ededed] px-3 pt-[2px]">Print</button>
                        <button class="rounded-[2px] border border-[#d9d9d9] bg-[#ededed] px-3 pt-[2px]">PDF</button>
                        <button class="rounded-[2px] border border-[#d9d9d9] bg-[#ededed] px-3 pt-[2px]">Regels los</button>
                        <button class="rounded-[2px] border border-[#d9d9d9] bg-[#ededed] px-3 pt-[2px]">Regels groeperen</button>
                    </div>
                </div>
                <table class="w-full table-fixed text-left">
                    <colgroup><col class="w-[38px]"><col class="w-[166px]"><col class="w-[166px]"><col class="w-[221px]"><col class="w-[417px]"><col class="w-[166px]"><col class="w-[141px]"><col class="w-[101px]"><col class="w-[101px]"><col class="w-[101px]"><col class="w-[42px]"></colgroup>
                    <thead class="bg-[#7f9d2a] text-white">
                        <tr class="h-[39px] *:pr-1 *:pl-[5px] *:font-normal">
                            <td></td>
                            <th><div class="flex items-center justify-between">Maat<svg class="h-[14px] w-[10px] rotate-180 text-[#b01818]"><use href="#sort"/></svg></div></th>
                            <th><div class="flex items-center justify-between">Pallet<svg class="h-[14px] w-[10px] text-[#c9d3bd]"><use href="#sort"/></svg></div></th>
                            <th><div class="flex items-center justify-between">Fust<svg class="h-[14px] w-[10px] text-[#c9d3bd]"><use href="#sort"/></svg></div></th>
                            <th><div class="flex items-center justify-between">Verpakwijze<svg class="h-[14px] w-[10px] text-[#c9d3bd]"><use href="#sort"/></svg></div></th>
                            <th><div class="flex items-center justify-between">Kwaliteit<svg class="h-[14px] w-[10px] text-[#b01818]"><use href="#sort"/></svg></div></th>
                            <th><div class="flex items-center justify-between">Datum<svg class="h-[14px] w-[10px] text-[#c9d3bd]"><use href="#sort"/></svg></div></th>
                            <th><div class="flex items-center justify-between">Kilo<svg class="h-[14px] w-[10px] text-[#c9d3bd]"><use href="#sort"/></svg></div></th>
                            <th><div class="flex items-center justify-between">Aantal<svg class="h-[14px] w-[10px] text-[#c9d3bd]"><use href="#sort"/></svg></div></th>
                            <th><div class="flex items-center justify-between">Pallets<svg class="h-[14px] w-[10px] text-[#c9d3bd]"><use href="#sort"/></svg></div></th>
                            <td></td>
                        </tr>
                    </thead>
                    <tbody>
                        <tr class="h-[42px] border-b border-[#7f9d2a] bg-[#f9f9f9] *:pl-[5px]">
                            <td><button class="ml-[6px] block" aria-label="Regel openen"><svg class="h-4 w-4 fill-[#b01818]"><use href="#open-row"/></svg></button></td>
                            <td class="bg-[#f1f1f1]">45-50 mm</td><td>blanco blok</td><td>Krat FRUIT voorraad</td><td>14x500g net</td><td class="bg-[#f1f1f1]">Klasse 1</td><td>2023-04-24</td><td>12.0</td><td>12</td><td>1 - LD</td>
                            <td><a href="#" aria-label="Info regel"><svg class="h-[29px] w-[29px] fill-[#2196f3]"><use href="#info"/></svg></a></td>
                        </tr>
                    </tbody>
                    <tfoot>
                        <tr class="h-[41px] font-bold *:pl-[5px]"><td colspan="8"></td><td>12</td><td>1</td><td></td></tr>
                    </tfoot>
                </table>
            </section>
        </div>
    </main>

    <button class="fixed right-[100px] bottom-0 flex h-5 w-[50px] justify-center rounded-t-lg bg-[#116bb0] pt-[9px]" aria-label="Naar boven"><svg class="h-2 w-3 rotate-180 text-white"><use href="#chevron"/></svg></button>
</body>
</html>
